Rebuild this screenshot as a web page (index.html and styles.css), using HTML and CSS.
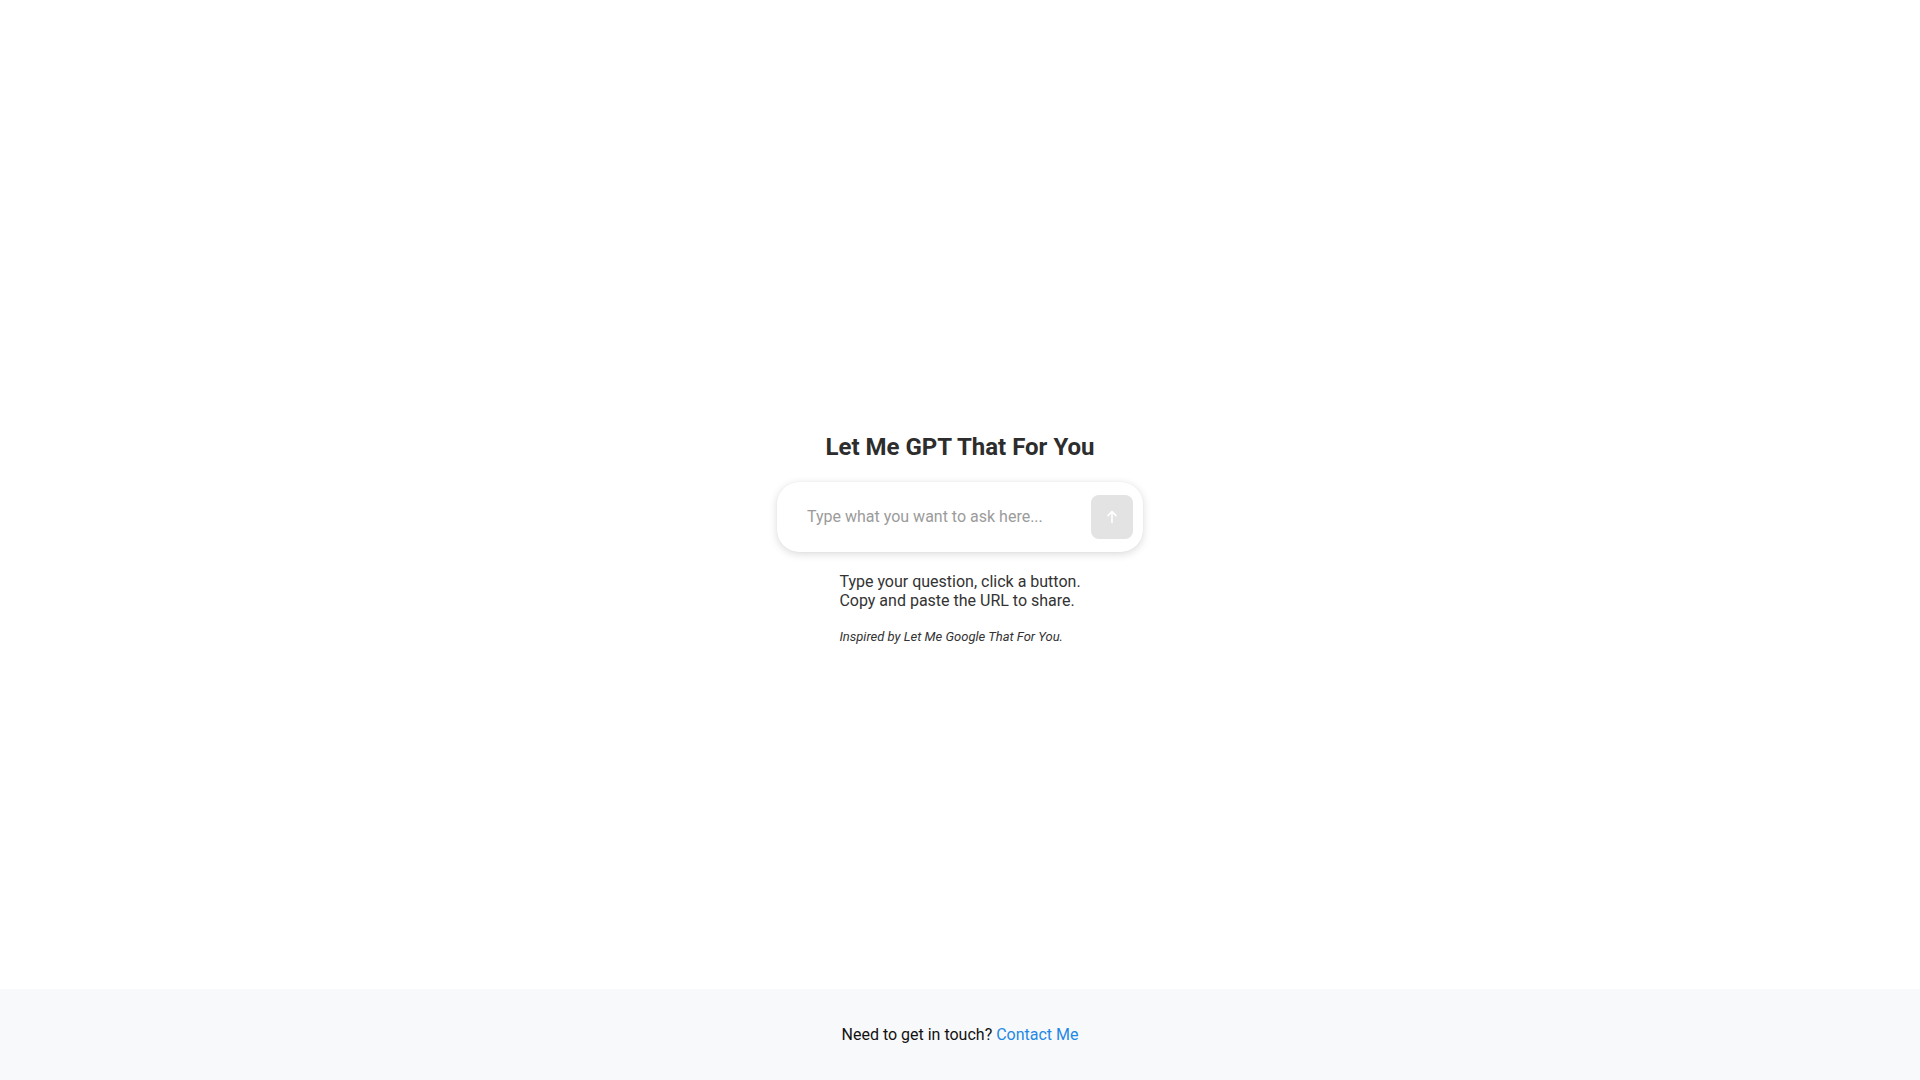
FILE: index.html
```html
<!DOCTYPE html>
<html lang="en">
<head>
<meta charset="utf-8">
<title>Let Me GPT That For You</title>
<link rel="stylesheet" href="styles.css">
</head>
<body>
<main class="main">
  <h1 class="title">Let Me GPT That For You</h1>
  <form class="ask">
    <input class="ask-input" type="text" placeholder="Type what you want to ask here...">
    <button class="ask-btn" type="button" aria-label="Submit">
      <svg width="14" height="14" viewBox="0 0 14 14" fill="none" stroke="#fff" stroke-width="1.6" stroke-linecap="round" stroke-linejoin="round"><path d="M7 12.5V1.8"/><path d="M3 5.6L7 1.6l4 4"/></svg>
    </button>
  </form>
  <div class="info">
    <p class="info-text">Type your question, click a button.<br>Copy and paste the URL to share.</p>
    <p class="info-note">Inspired by Let Me Google That For You.</p>
  </div>
</main>
<footer class="footer">
  <span>Need to get in touch? <a class="footer-link" href="#">Contact Me</a></span>
</footer>
</body>
</html>
```
FILE: styles.css
```css
* { box-sizing: border-box; }
html, body { margin: 0; padding: 0; height: 100%; }
body {
  font-family: Roboto, "Liberation Sans", sans-serif;
  background: #fff;
  display: flex;
  flex-direction: column;
  min-height: 100vh;
}
.main {
  flex: 1;
  display: flex;
  flex-direction: column;
  align-items: center;
  justify-content: center;
  padding-top: 88px;
}
.title {
  margin: 0 0 21px;
  font-size: 24px;
  line-height: 28px;
  font-weight: 700;
  color: #2d2d2d;
}
.ask {
  width: 366px;
  height: 70px;
  border-radius: 22px;
  background: #fff;
  box-shadow: 0 2px 8px rgba(0,0,0,0.15), 0 0 1px rgba(0,0,0,0.08);
  display: flex;
  align-items: center;
  padding: 0 10px 0 30px;
  margin: 0;
}
.ask-input {
  flex: 1;
  border: none;
  outline: none;
  background: transparent;
  font-family: Roboto, "Liberation Sans", sans-serif;
  font-size: 16px;
  color: #333;
  padding: 0;
  height: 24px;
}
.ask-input::placeholder { color: #9b9b9b; }
.ask-btn {
  width: 42px;
  height: 44px;
  border: none;
  border-radius: 8px;
  background: #e3e3e3;
  display: flex;
  align-items: center;
  justify-content: center;
  padding: 0;
  margin-left: 8px;
}
.info {
  margin-top: 20px;
  width: max-content;
}
.info-text {
  margin: 0;
  font-size: 16px;
  line-height: 19px;
  color: #333;
}
.info-note {
  margin: 19px 0 0;
  font-size: 13px;
  line-height: 16px;
  font-style: italic;
  color: #333;
}
.footer {
  height: 91px;
  background: #f8f9fa;
  display: flex;
  align-items: center;
  justify-content: center;
  font-size: 16px;
  color: #111;
}
.footer-link {
  color: #1e88e5;
  text-decoration: none;
}
```
